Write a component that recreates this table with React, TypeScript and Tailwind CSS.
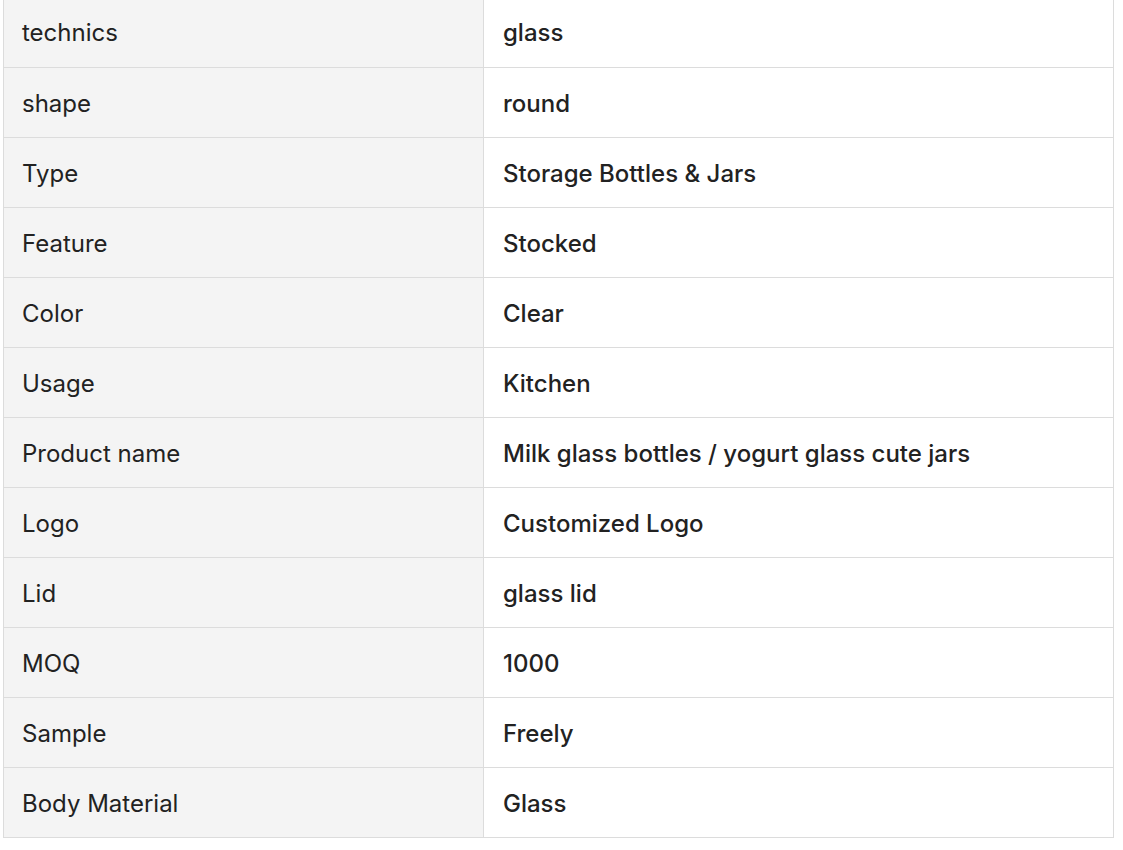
import React from "react";

const rows: [string, string][] = [
  ["technics", "glass"],
  ["shape", "round"],
  ["Type", "Storage Bottles & Jars"],
  ["Feature", "Stocked"],
  ["Color", "Clear"],
  ["Usage", "Kitchen"],
  ["Product name", "Milk glass bottles / yogurt glass cute jars"],
  ["Logo", "Customized Logo"],
  ["Lid", "glass lid"],
  ["MOQ", "1000"],
  ["Sample", "Freely"],
  ["Body Material", "Glass"],
];

export default function App() {
  return (
    <div
      className="w-[1123px] h-[850px] overflow-hidden bg-white text-[#222]"
      style={{ fontFamily: "Inter, 'Noto Sans', sans-serif" }}
    >
      <div className="ml-[3px] -mt-[4px] w-[1111px] border border-[#dcdcdc]">
        {rows.map(([k, v], i) => (
          <div
            key={k}
            className={`flex h-[70px] ${i > 0 ? "border-t border-[#dcdcdc]" : ""}`}
          >
            <div className="w-[480px] shrink-0 bg-[#f4f4f4] border-r border-[#dcdcdc] flex items-center pl-[18px] pt-[2px] text-[24px]">
              {k}
            </div>
            <div className="flex-1 flex items-center pl-[19px] pt-[2px] text-[24px] font-medium">
              {v}
            </div>
          </div>
        ))}
      </div>
    </div>
  );
}
